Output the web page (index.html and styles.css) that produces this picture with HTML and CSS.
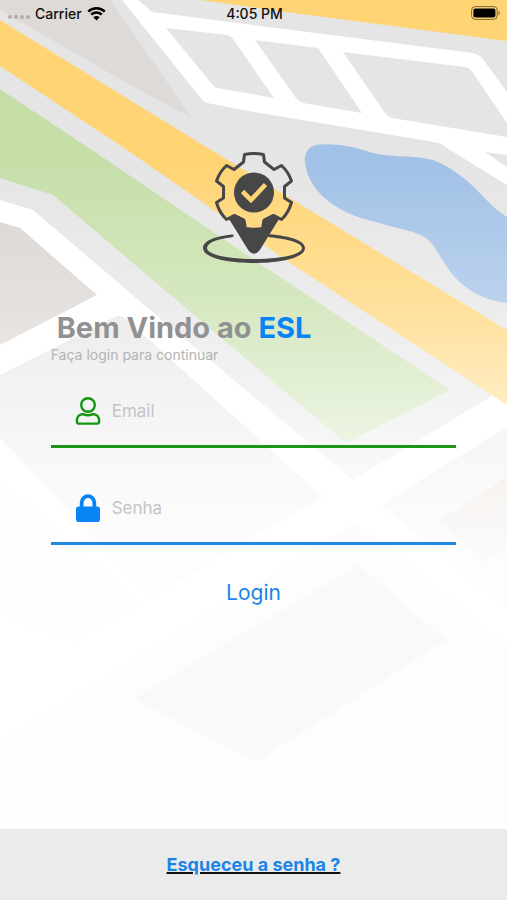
FILE: index.html
```html
<!DOCTYPE html>
<html lang="pt-BR">
<head>
    <meta charset="UTF-8">
    <meta name="viewport" content="width=device-width, initial-scale=1.0">
    <title>ESL - Login</title>
    <link rel="stylesheet" href="styles.css">
</head>
<body>
    <!-- Map background -->
    <svg class="map" viewBox="0 0 507 900" preserveAspectRatio="xMidYMin slice" aria-hidden="true">
        <defs>
            <linearGradient id="fade" x1="0" y1="0" x2="0" y2="1">
                <stop offset="0" stop-color="#fff" stop-opacity="0"/>
                <stop offset="0.18" stop-color="#fff" stop-opacity="0"/>
                <stop offset="0.34" stop-color="#fff" stop-opacity="0.29"/>
                <stop offset="0.44" stop-color="#fff" stop-opacity="0.54"/>
                <stop offset="0.53" stop-color="#fff" stop-opacity="0.78"/>
                <stop offset="0.61" stop-color="#fff" stop-opacity="0.91"/>
                <stop offset="1" stop-color="#fff" stop-opacity="0.91"/>
            </linearGradient>
        </defs>
        <rect width="507" height="900" fill="#e5e5e5"/>
        <path fill="#dedad7" d="M0 0H110L192 118L123 81L0 10Z"/>

        <!-- Streets at the top -->
        <path fill="#fff" d="M122 0H138L152 12L253 25L473 53Q481 55 485 62L507 92V185L450 150L443 145Q440 143 434 142L254 112L207 103Q203 101 200 97Z"/>
        <path fill="#e5e5e5" d="M166 28L227 35Q231 36 233 39L274 98L217 88Q214 87 212 84Z"/>
        <path fill="#e5e5e5" d="M255 40L318 48L362 113L303 103Q299 102 296 98Z"/>
        <path fill="#e5e5e5" d="M343 52L465 67Q470 68 473 73L507 123V137L392 118Q388 117 385 113Z"/>
        <path fill="#e5e5e5" d="M485 152L507 155V167Z"/>
        <path fill="#ffd474" d="M200 0H507V41L293 13Z"/>

        <!-- Streets and blocks -->
        <path fill="#fff" d="M0 200L33 210L150 310L353 480L507 387V829H0Z"/>
        <path fill="#d9d4d0" d="M0 222L20 228L97 295L0 345Z"/>
        <path fill="#e5e5e5" d="M0 375L115 317Q120 314 126 319L323 497L150 598L0 438Z"/>
        <path fill="#f4f4f4" d="M0 480L100 568L140 604L75 642L0 615Z"/>
        <path fill="#e5e5e5" d="M507 427L381 505L507 610Z"/>
        <path fill="#d8c9bd" d="M507 477L438 522L485 561L507 548Z"/>
        <path fill="#ebebeb" d="M0 742L345 529Q356 522 367 530L507 645V829H0Z"/>
        <path fill="#c6bcb2" d="M358 565L446 640L256 762L134 699Z"/>

        <!-- Park, avenue and lake -->
        <path fill="#c6dfa9" d="M0 89L92 150L247 255L450 390L348 442L340 438L188 310L53 195L0 178Z"/>
        <path fill="#ffd474" d="M0 20L211 150L507 330V405L290 263L127 150L0 66Z"/>
        <path fill="#a1c1e6" d="M316 145C330 143 348 145 363 150C387 159 410 154 433 160C444 164 455 171 466 180C480 191 491 208 507 217V303C484 301 466 290 453 275C440 259 437 247 426 238C414 231 401 229 386 225C374 221 361 219 346 212C322 200 308 184 305 163C304 154 308 147 316 145Z"/>
        <rect width="507" height="900" fill="url(#fade)"/>
    </svg>

    <header class="status-bar">
        <div class="carrier">
            <span class="dots"><i></i><i></i><i></i><i></i></span>
            <span>Carrier</span>
            <svg class="wifi" viewBox="0 0 18 14" aria-hidden="true">
                <path d="M1.2 5.2a11.2 11.2 0 0 1 15.6 0M4 8.1a7.2 7.2 0 0 1 10 0" fill="none" stroke="#000" stroke-width="2.4"/>
                <path d="M9 13.6L6 10.6a4.3 4.3 0 0 1 6 0Z"/>
            </svg>
        </div>
        <div>4:05 PM</div>
        <svg class="battery" viewBox="0 0 30 14" aria-hidden="true">
            <rect x="0.6" y="0.6" width="25.6" height="12.8" rx="3.6" fill="none" stroke="#000" stroke-opacity="0.5"/>
            <rect x="2.4" y="2.4" width="22" height="9.2" rx="2"/>
            <path d="M27.5 4.8a2.5 2.5 0 0 1 0 4.4Z" fill-opacity="0.5"/>
        </svg>
    </header>

    <main class="container">
        <svg class="logo" viewBox="8 12 104 112" role="img" aria-label="ESL">
            <path fill="#474747" d="M35 79L41 74L51 79L52 89Q60 90.500 68 89L69 79L79 74L85 79L65.500 110.500Q60 117 54.500 110.500Z"/>
            <path fill="none" stroke="#474747" stroke-width="3" stroke-linejoin="round" d="M50.500 14.500Q60 12.500 69.500 14.500L70.500 22L80 29.500L87.500 25.500Q94.500 32 97.500 41L90.500 46.500V58L97.500 62.500Q94.500 73 87.500 79.500L80 75.500L70 80.500L68.500 88.500Q60 90 51.500 88.500L50 80.500L40 75.500L32.500 79.500Q25.500 73 22.500 62.500L29.500 58V46.500L22.500 41Q25.500 32 32.500 25.500L40 29.500L49.500 22Z"/>
            <circle cx="60" cy="52.500" r="20" fill="#474747"/>
            <path fill="none" stroke="#ffd474" stroke-width="4.600" d="M48.500 51.500L57 60L71.500 44.500"/>
            <path fill="#474747" d="M39 94.500C21 96 9 101 9 108C9 118 34 123 60 123S111 118 111 108C111 101 97 96 75 94.300Q73 96 75 97.200C95 99 108 103 108 108C108 115 84 119 60 119S13 115 13 108C13 103 23 99 38 97.300Q41 96 39 94.500Z"/>
        </svg>

        <h1>Bem Vindo ao <span>ESL</span></h1>
        <p class="subtitle">Faça login para continuar</p>

        <form id="loginForm">
            <div class="field field-email">
                <label for="email" aria-label="Email">
                    <svg viewBox="0 0 26 28" fill="none" stroke="#139610" stroke-width="2.4" aria-hidden="true">
                        <circle cx="13" cy="8" r="6.8"/>
                        <path d="M8 17.3C10 17.3 11 18.3 13 18.3S16 17.3 18 17.3C22 17.3 24.1 20 24.1 23.5V24.5Q24.1 26.6 22 26.6H4Q1.9 26.6 1.9 24.5V23.5C1.9 20 4 17.3 8 17.3Z"/>
                    </svg>
                </label>
                <input type="email" id="email" name="email" placeholder="Email" required>
            </div>
            <div class="field field-password">
                <label for="password" aria-label="Senha">
                    <svg viewBox="0 0 26 28" aria-hidden="true">
                        <path d="M6.7 14V8.5a6.3 6.3 0 0 1 12.6 0V14" fill="none" stroke="#0984f5" stroke-width="3.8"/>
                        <rect x="1" y="12.5" width="24" height="15.5" rx="2.8" fill="#0984f5"/>
                    </svg>
                </label>
                <input type="password" id="password" name="password" placeholder="Senha" required>
            </div>
            <button type="submit">Login</button>
        </form>
    </main>

    <footer>
        <a href="#">Esqueceu a senha ?</a>
    </footer>
</body>
</html>
```
FILE: styles.css
```css
* {
    box-sizing: border-box;
}
body {
    margin: 0;
    min-height: 100vh;
    display: flex;
    flex-direction: column;
    position: relative;
    font-family: Inter, 'Liberation Sans', sans-serif;
}
.map {
    position: absolute;
    top: 0;
    left: 0;
    width: 100%;
    height: 100%;
    z-index: -1;
}
.status-bar {
    display: grid;
    grid-template-columns: 1fr auto 1fr;
    align-items: center;
    height: 26px;
    padding: 0 6px 0 8px;
    font-size: 14px;
    font-weight: 500;
    color: #111;
}
.carrier {
    display: flex;
    align-items: center;
    gap: 5px;
}
.dots {
    display: flex;
    gap: 2px;
    padding-top: 8px;
}
.dots i {
    width: 4px;
    height: 4px;
    border-radius: 50%;
    background-color: #b0aeac;
}
.wifi {
    width: 19px;
    height: 15px;
}
.battery {
    width: 30px;
    height: 14px;
    justify-self: end;
}
.container {
    flex: 1;
    display: flex;
    flex-direction: column;
    padding: 126px 10% 0;
}
.logo {
    width: 104px;
    height: 112px;
    align-self: center;
}
h1 {
    margin: 46px 0 0;
    padding-left: 6px;
    font-size: 29px;
    line-height: 36px;
    font-weight: 700;
    color: #919191;
}
h1 span {
    color: #0984f5;
}
.subtitle {
    margin: 0;
    font-size: 14px;
    line-height: 18px;
    color: #b3b3b3;
}
.field {
    display: flex;
    align-items: center;
    gap: 11px;
    height: 72px;
    padding-left: 24px;
    border-bottom: 3px solid;
}
.field-email {
    margin-top: 12px;
    border-color: #1c9618;
}
.field-password {
    margin-top: 25px;
    border-color: #1f87e5;
}
.field label {
    display: flex;
}
.field svg {
    width: 26px;
    height: 28px;
}
input {
    flex: 1;
    min-width: 0;
    padding: 0;
    border: none;
    outline: none;
    background: transparent;
    color: #444;
    font-family: inherit;
    font-size: 17px;
}
input::placeholder {
    color: #c4c4c4;
}
button {
    display: block;
    margin: 34px auto 0;
    padding: 0;
    border: none;
    background: transparent;
    color: #1a85e5;
    font-family: inherit;
    font-size: 21px;
    line-height: 28px;
    cursor: pointer;
}
footer {
    display: flex;
    align-items: center;
    justify-content: center;
    height: 71px;
    background-color: #ebebeb;
}
footer a {
    color: #1a85e5;
    font-size: 18px;
    font-weight: 700;
    text-decoration: underline;
    text-decoration-color: #111;
    text-decoration-thickness: 2px;
}
```
